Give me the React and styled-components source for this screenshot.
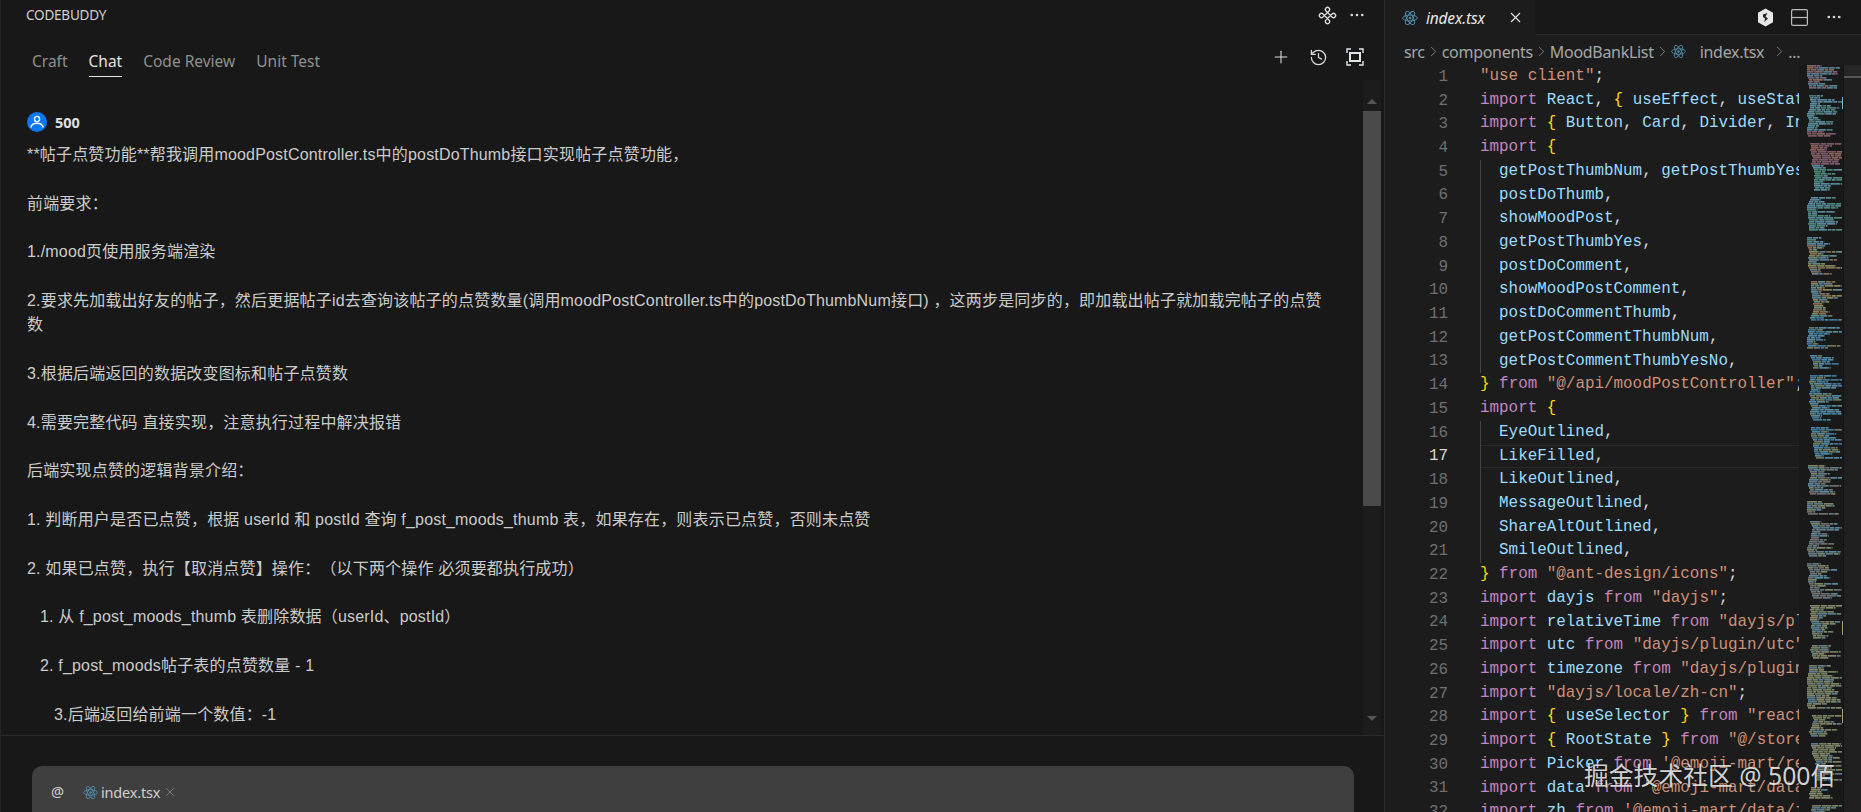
import styled, { createGlobalStyle } from 'styled-components'
import { Plus, History, Ellipsis, Command, ChevronRight, X } from 'lucide-react'

const GlobalStyle = createGlobalStyle`
  html, body {
    margin: 0;
    background: #181818;
  }
  * { box-sizing: border-box; }
`

const UI_FONT = `"Noto Sans", "Noto Sans CJK SC", sans-serif`

const Page = styled.div`
  position: relative;
  width: 1861px;
  height: 812px;
  overflow: hidden;
  display: flex;
  font-family: ${UI_FONT};
  color: #d0d0d0;
`

const ChatPanel = styled.section`
  width: 1385px;
  height: 100%;
  flex: none;
  display: flex;
  flex-direction: column;
  background: #181818;
  border-left: 1px solid #242424;
  border-right: 1px solid #2b2b2b;
`

const TitleRow = styled.div`
  height: 30px;
  flex: none;
  display: flex;
  align-items: center;
  justify-content: space-between;
  padding: 0 18px 0 25px;
  font-size: 13.5px;
  letter-spacing: -0.2px;
  color: #cfcfcf;
`

const IconGroup = styled.div`
  display: flex;
  align-items: center;
  gap: ${p => p.$gap || 0}px;
  color: #dcdcdc;
`

const LoopIcon = styled(Command)`
  transform: rotate(45deg);
`

const TabRow = styled.div`
  height: 50px;
  flex: none;
  display: flex;
  align-items: flex-start;
  justify-content: space-between;
  padding: 17px 20px 0 31px;
`

const Tabs = styled.div`
  display: flex;
  gap: 21px;
`

const Tab = styled.div`
  height: 30px;
  font-size: 15.5px;
  line-height: 28px;
  color: ${p => (p.$active ? '#e2e2e2' : '#8f8f8f')};
  border-bottom: 1px solid ${p => (p.$active ? '#e2e2e2' : 'transparent')};
`

const ChatBody = styled.div`
  height: 655px;
  flex: none;
  display: flex;
  overflow: hidden;
`

const Messages = styled.div`
  flex: 1;
  min-width: 0;
  padding: 32px 0 0 26px;
`

const UserRow = styled.div`
  display: flex;
  align-items: center;
  gap: 8px;
  height: 20px;
  margin-bottom: 11px;
  font-size: 14.5px;
  font-weight: 700;
  color: #e0e0e0;
`

const Avatar = styled.svg`
  width: 20px;
  height: 20px;
`

const MessageLine = styled.p`
  margin: 0 0 24.4px;
  padding-left: ${p => p.$indent || 0}px;
  font-family: "Liberation Sans", "Noto Sans CJK SC", sans-serif;
  font-size: 16px;
  line-height: 24.3px;
  letter-spacing: 0.18px;
  white-space: pre;
  text-spacing-trim: space-all;
  color: #cbcbcb;
`

const ChatScroll = styled.div`
  width: 18px;
  margin-right: 3px;
  flex: none;
  display: flex;
  flex-direction: column;
  align-items: center;
  padding-top: 19px;
  background: #1c1c1c;
`

const ArrowUp = styled.div`
  width: 0;
  height: 0;
  border: 5px solid transparent;
  border-top: 0;
  border-bottom: 5px solid #555;
`

const ArrowDown = styled(ArrowUp)`
  border-bottom: 0;
  border-top: 5px solid #555;
`

const Thumb = styled.div`
  width: 100%;
  height: 395px;
  margin: 7px 0 210px;
  background: #4a4a4a;
`

const Composer = styled.div`
  flex: 1;
  border-top: 1px solid #2a2a2a;
  padding: 30px 30px 0 31px;
`

const InputBox = styled.div`
  height: 80px;
  background: #3f3f3f;
  border-radius: 10px 10px 0 0;
  display: flex;
  align-items: flex-start;
  padding: 15px 0 0 19px;
  gap: 19px;
  font-size: 14.5px;
  color: #cfcfcf;
`

const Chip = styled.div`
  display: flex;
  align-items: center;
  gap: 3px;
  height: 22px;
  letter-spacing: -0.2px;
`

const EditorPanel = styled.section`
  flex: 1;
  min-width: 0;
  display: flex;
  flex-direction: column;
  background: #1c1c1c;
`

const TabBar = styled.div`
  height: 35px;
  flex: none;
  display: flex;
  justify-content: space-between;
  background: #181818;
  border-bottom: 1px solid #262626;
`

const EditorTab = styled.div`
  width: 150px;
  height: 35px;
  display: flex;
  align-items: center;
  padding: 0 11px 0 17px;
  background: #1c1c1c;
  font-size: 15.5px;
  font-style: italic;
  color: #e6e6e6;
  letter-spacing: -0.2px;
`

const TabName = styled.span`
  flex: 1;
  margin-left: 8px;
`

const TabActions = styled(IconGroup)`
  padding-right: 18px;
`

const Breadcrumb = styled.div`
  height: 30px;
  flex: none;
  display: flex;
  align-items: center;
  padding: 3px 0 0 19px;
  font-size: 16px;
  letter-spacing: -0.3px;
  color: #a6a6a6;
  white-space: pre;
`

const CrumbFile = styled.span`
  margin: 0 7px 0 14px;
`

const EditorBody = styled.div`
  flex: 1;
  min-height: 0;
  display: flex;
  overflow: hidden;
`

const CodeArea = styled.div`
  width: 414px;
  flex: none;
  overflow: hidden;
  font-family: "Liberation Mono", monospace;
  font-size: 15.9px;
`

const CodeRow = styled.div`
  height: 23.73px;
  display: flex;
  align-items: center;
`

const LineNumber = styled.div`
  width: 63px;
  flex: none;
  text-align: right;
  color: ${p => (p.$active ? '#d8d8d8' : '#6e7070')};
`

const CodeText = styled.div`
  margin-left: 32px;
  flex: 1;
  height: 100%;
  line-height: 23.73px;
  white-space: pre;
  box-shadow: ${p => [
    p.$guide && 'inset 1px 0 0 #444',
    p.$active && 'inset 0 1px 0 #2a2a2a, inset 0 -1px 0 #2a2a2a',
  ].filter(Boolean).join(', ') || 'none'};
`

const TOKEN_COLORS = {
  keyword: '#c586c0',
  name: '#9cdcfe',
  string: '#ce9178',
  brace: '#ffd700',
  punct: '#d4d4d4',
}

const Token = styled.span`
  color: ${p => TOKEN_COLORS[p.$kind]};
`

const Minimap = styled.svg`
  width: 44px;
  flex: none;
  background: #191919;
`

const OverviewRuler = styled.div`
  flex: 1;
  background: #1f1f1f;
  border-left: 1px solid #141414;
`

const RulerSlider = styled.div`
  height: 13px;
  background: #262626;
  border-bottom: 2px solid #555;
`

const Watermark = styled.div`
  position: absolute;
  left: 1584px;
  top: 760px;
  font-size: 24.8px;
  line-height: 30px;
  white-space: nowrap;
  color: rgba(255, 255, 255, 0.82);
  text-shadow: 0 0 2px rgba(0, 0, 0, 0.6);
`

const CHAT_LINES = [
  { text: '**帖子点赞功能**帮我调用moodPostController.ts中的postDoThumb接口实现帖子点赞功能，' },
  { text: '前端要求：' },
  { text: '1./mood页使用服务端渲染' },
  { text: '2.要求先加载出好友的帖子，然后更据帖子id去查询该帖子的点赞数量(调用moodPostController.ts中的postDoThumbNum接口) ，这两步是同步的，即加载出帖子就加载完帖子的点赞\n数' },
  { text: '3.根据后端返回的数据改变图标和帖子点赞数' },
  { text: '4.需要完整代码 直接实现，注意执行过程中解决报错' },
  { text: '后端实现点赞的逻辑背景介绍：' },
  { text: '1. 判断用户是否已点赞，根据 userId 和 postId 查询 f_post_moods_thumb 表，如果存在，则表示已点赞，否则未点赞' },
  { text: '2. 如果已点赞，执行【取消点赞】操作：（以下两个操作 必须要都执行成功）' },
  { text: '1. 从 f_post_moods_thumb 表删除数据（userId、postId）', indent: 13 },
  { text: '2. f_post_moods帖子表的点赞数量 - 1', indent: 13 },
  { text: '3.后端返回给前端一个数值：-1', indent: 27 },
]

const CODE_LINES = [
  '"use client";',
  'import React, { useEffect, useState } from "react";',
  'import { Button, Card, Divider, Input, List } from "antd";',
  'import {',
  '  getPostThumbNum, getPostThumbYesNo,',
  '  postDoThumb,',
  '  showMoodPost,',
  '  getPostThumbYes,',
  '  postDoComment,',
  '  showMoodPostComment,',
  '  postDoCommentThumb,',
  '  getPostCommentThumbNum,',
  '  getPostCommentThumbYesNo,',
  '} from "@/api/moodPostController";',
  'import {',
  '  EyeOutlined,',
  '  LikeFilled,',
  '  LikeOutlined,',
  '  MessageOutlined,',
  '  ShareAltOutlined,',
  '  SmileOutlined,',
  '} from "@ant-design/icons";',
  'import dayjs from "dayjs";',
  'import relativeTime from "dayjs/plugin/relativeTime";',
  'import utc from "dayjs/plugin/utc";',
  'import timezone from "dayjs/plugin/timezone";',
  'import "dayjs/locale/zh-cn";',
  'import { useSelector } from "react-redux";',
  'import { RootState } from "@/stores";',
  "import Picker from '@emoji-mart/react';",
  "import data from '@emoji-mart/data';",
  "import zh from '@emoji-mart/data/i18n/zh.json';",
]

function tokenize(line) {
  const parts = line.match(/"[^"]*"|'[^']*'|\b(?:import|from)\b|[{}]|\w+|\s+|./g) || []
  return parts.map(part => {
    if (/^["']/.test(part)) return { part, kind: part.length > 1 ? 'string' : 'punct' }
    if (part === 'import' || part === 'from') return { part, kind: 'keyword' }
    if (part === '{' || part === '}') return { part, kind: 'brace' }
    if (/^\w+$/.test(part)) return { part, kind: 'name' }
    return { part, kind: 'punct' }
  })
}

// colour bands of the minimap, by y inside the svg
const MINI_BANDS = [
  [0, 28, ['#6f9fb8', '#6f9fb8', '#9a7a96', '#aa8572']],
  [28, 66, ['#6fadc5', '#6fadc5', '#5d9a90']],
  [66, 100, ['#9f6f88', '#b07a6a', '#9a6f80']],
  [100, 180, ['#5faa98', '#6fadc5']],
  [180, 250, ['#aa8a6a', '#6f9fb8', '#7fb0b0', '#aaaa70']],
  [250, 400, ['#4f96c0', '#5faad0', '#6fadc5', '#8a9a70']],
  [400, 540, ['#7a9aaa', '#9aaa80', '#8a8a8a', '#6fadc5']],
  [540, 748, ['#8f9f7a', '#6f9fb8', '#9aaa80', '#aaaa8a']],
]

function buildMinimap() {
  const rects = []
  let seed = 17
  const rand = () => {
    seed = (seed * 16807) % 2147483647
    return seed / 2147483647
  }
  let indent = 0
  let blockLeft = 12
  for (let y = 0; y < 748; y += 2) {
    // blank line between blocks
    if (blockLeft-- <= 0) {
      blockLeft = 6 + Math.floor(rand() * 22)
      indent = Math.floor(rand() * 6)
      y += 4
      continue
    }
    indent = Math.max(0, Math.min(16, indent + Math.round((rand() - 0.5) * 3)))
    const band = MINI_BANDS.find(b => y >= b[0] && y < b[1])
    if (!band) continue
    let x = 8 + indent
    const end = Math.min(43, x + 8 + rand() * 28)
    while (x < end) {
      const w = Math.min(end - x, 3 + rand() * 7)
      rects.push({ x, y, w, fill: band[2][Math.floor(rand() * band[2].length)] })
      x += w + 0.7
    }
  }
  return rects
}

const MINIMAP_RECTS = buildMinimap()

function ReactIcon({ size = 16, color = '#4f8fae' }) {
  return (
    <svg width={size} height={size} viewBox="0 0 24 24" fill="none" stroke={color} strokeWidth="1.4">
      <circle cx="12" cy="12" r="2" fill={color} stroke="none" />
      <ellipse cx="12" cy="12" rx="11" ry="4.4" />
      <ellipse cx="12" cy="12" rx="11" ry="4.4" transform="rotate(60 12 12)" />
      <ellipse cx="12" cy="12" rx="11" ry="4.4" transform="rotate(120 12 12)" />
    </svg>
  )
}

function FrameIcon() {
  return (
    <svg width="18" height="18" viewBox="0 0 18 18" fill="none" stroke="#dfe6ea" strokeWidth="1.4">
      <path d="M1 5V1h4M13 1h4v4M17 13v4h-4M5 17H1v-4" />
      <rect x="4" y="5" width="10" height="8" strokeWidth="2" />
    </svg>
  )
}

function HexLogo() {
  return (
    <svg width="17" height="19" viewBox="0 0 17 19">
      <path d="M8.5 0.5 16 4.8v9.4l-7.5 4.3L1 14.200V4.800z" fill="#e8e8e8" />
      <path d="M6 6.500 10.500 5 8.500 8.500 11 10.500 7 14 8.200 10.500 6 9z" fill="#222" />
    </svg>
  )
}

function LayoutIcon() {
  return (
    <svg width="17" height="17" viewBox="0 0 17 17" fill="none" stroke="#bdbdbd" strokeWidth="1.2">
      <rect x="0.600" y="0.600" width="15.800" height="15.800" rx="1.500" />
      <path d="M0.600 8.500h15.800" />
    </svg>
  )
}

function Crumb() {
  return <ChevronRight size={17} strokeWidth={1} color="#a0a0a0" />
}

export default function App() {
  return (
    <Page>
      <GlobalStyle />
      <ChatPanel>
        <TitleRow>
          <span>CODEBUDDY</span>
          <IconGroup $gap={12}>
            <LoopIcon size={17} strokeWidth={1.8} />
            <Ellipsis size={18} strokeWidth={1.6} />
          </IconGroup>
        </TitleRow>
        <TabRow>
          <Tabs>
            <Tab>Craft</Tab>
            <Tab $active>Chat</Tab>
            <Tab>Code Review</Tab>
            <Tab>Unit Test</Tab>
          </Tabs>
          <IconGroup $gap={18}>
            <Plus size={20} strokeWidth={1.3} />
            <History size={19} strokeWidth={1.6} />
            <FrameIcon />
          </IconGroup>
        </TabRow>
        <ChatBody>
          <Messages>
            <UserRow>
              <Avatar viewBox="0 0 20 20">
                <circle cx="10" cy="10" r="10" fill="#0b78f0" />
                <circle cx="10" cy="7" r="2.600" fill="none" stroke="#fff" strokeWidth="1.300" />
                <path d="M3.800 15.500c.6-3 3-4.300 6.200-4.300s5.600 1.300 6.200 4.300" fill="none" stroke="#fff" strokeWidth="1.400" />
              </Avatar>
              500
            </UserRow>
            {CHAT_LINES.map(line => (
              <MessageLine key={line.text} $indent={line.indent}>{line.text}</MessageLine>
            ))}
          </Messages>
          <ChatScroll>
            <ArrowUp />
            <Thumb />
            <ArrowDown />
          </ChatScroll>
        </ChatBody>
        <Composer>
          <InputBox>
            <span>@</span>
            <Chip>
              <ReactIcon size={15} />
              index.tsx
              <X size={14} strokeWidth={1.200} color="#9a9a9a" />
            </Chip>
          </InputBox>
        </Composer>
      </ChatPanel>

      <EditorPanel>
        <TabBar>
          <EditorTab>
            <ReactIcon size={16} />
            <TabName>index.tsx</TabName>
            <X size={17} strokeWidth={1.500} color="#e6e6e6" />
          </EditorTab>
          <TabActions $gap={17}>
            <HexLogo />
            <LayoutIcon />
            <Ellipsis size={18} strokeWidth={1.600} />
          </TabActions>
        </TabBar>
        <Breadcrumb>
          src<Crumb />components<Crumb />MoodBankList<Crumb />
          <ReactIcon size={15} /><CrumbFile>index.tsx</CrumbFile><Crumb />...
        </Breadcrumb>
        <EditorBody>
          <CodeArea>
            {CODE_LINES.map((line, i) => {
              const guide = (i >= 4 && i <= 12) || (i >= 15 && i <= 20)
              return (
                <CodeRow key={i}>
                  <LineNumber $active={i === 16}>{i + 1}</LineNumber>
                  <CodeText $guide={guide} $active={i === 16}>
                    {tokenize(line).map((t, j) => (
                      <Token key={j} $kind={t.kind}>{t.part}</Token>
                    ))}
                  </CodeText>
                </CodeRow>
              )
            })}
          </CodeArea>
          <Minimap viewBox="0 0 44 748" height="748">
            {MINIMAP_RECTS.map((r, i) => (
              <rect key={i} x={r.x} y={r.y} width={r.w} height="1.700" fill={r.fill} opacity="0.750" />
            ))}
            <rect x="43" y="32" width="1" height="12" fill="#7fb0d0" />
            <rect x="43" y="556" width="1" height="14" fill="#b0a080" />
            <rect x="43" y="644" width="1" height="14" fill="#b0a080" />
          </Minimap>
          <OverviewRuler>
            <RulerSlider />
          </OverviewRuler>
        </EditorBody>
      </EditorPanel>

      <Watermark>掘金技术社区 @ 500佰</Watermark>
    </Page>
  )
}
